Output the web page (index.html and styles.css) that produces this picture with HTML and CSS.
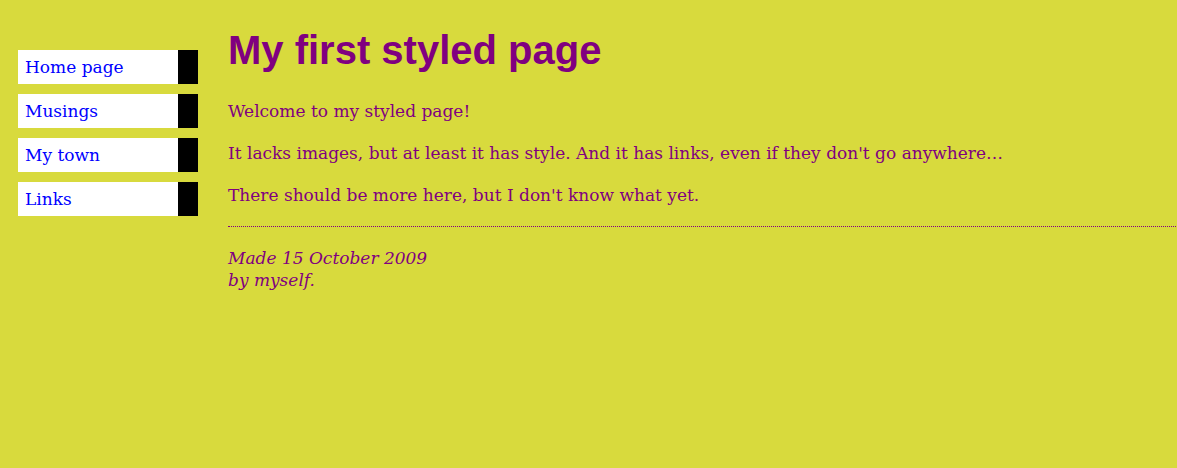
FILE: index.html
```html
<!DOCTYPE html>
<html>
<head>
<meta charset="utf-8">
<title>My first styled page</title>
<link rel="stylesheet" href="styles.css">
</head>
<body>
<div class="page">
  <ul class="navbar">
    <li><a href="#">Home page</a></li>
    <li><a href="#">Musings</a></li>
    <li><a href="#">My town</a></li>
    <li><a href="#">Links</a></li>
  </ul>
  <main class="content">
    <h1 class="title">My first styled page</h1>
    <p class="para">Welcome to my styled page!</p>
    <p class="para">It lacks images, but at least it has style. And it has links, even if they don't go anywhere…</p>
    <p class="para">There should be more here, but I don't know what yet.</p>
    <address class="footer">Made 15 October 2009<br>by myself.</address>
  </main>
</div>
</body>
</html>
```
FILE: styles.css
```css
html, body {
  margin: 0;
  padding: 0;
}
body {
  background-color: #d8da3d;
  color: #800080;
  font-family: "DejaVu Serif", "Liberation Serif", serif;
  font-size: 17px;
  line-height: 22px;
}
.page {
  display: flex;
  align-items: flex-start;
}
.navbar {
  list-style: none;
  margin: 40px 30px 0 18px;
  padding: 0;
  width: 180px;
  flex: none;
}
.navbar li {
  background: #ffffff;
  margin: 10px 0;
  padding: 6px 6px 6px 7px;
  border-right: 20px solid #000000;
}
.navbar a {
  color: #0000ff;
  text-decoration: none;
}
.content {
  flex: 1;
  margin-right: 1px;
}
.title {
  font-family: "Liberation Sans", Arial, sans-serif;
  font-size: 40px;
  line-height: 46px;
  font-weight: bold;
  margin: 27px 0 27px;
}
.para {
  margin: 20px 0;
}
.footer {
  margin-top: 20px;
  padding-top: 20px;
  border-top: 1px dotted #800080;
  font-style: italic;
}
```
